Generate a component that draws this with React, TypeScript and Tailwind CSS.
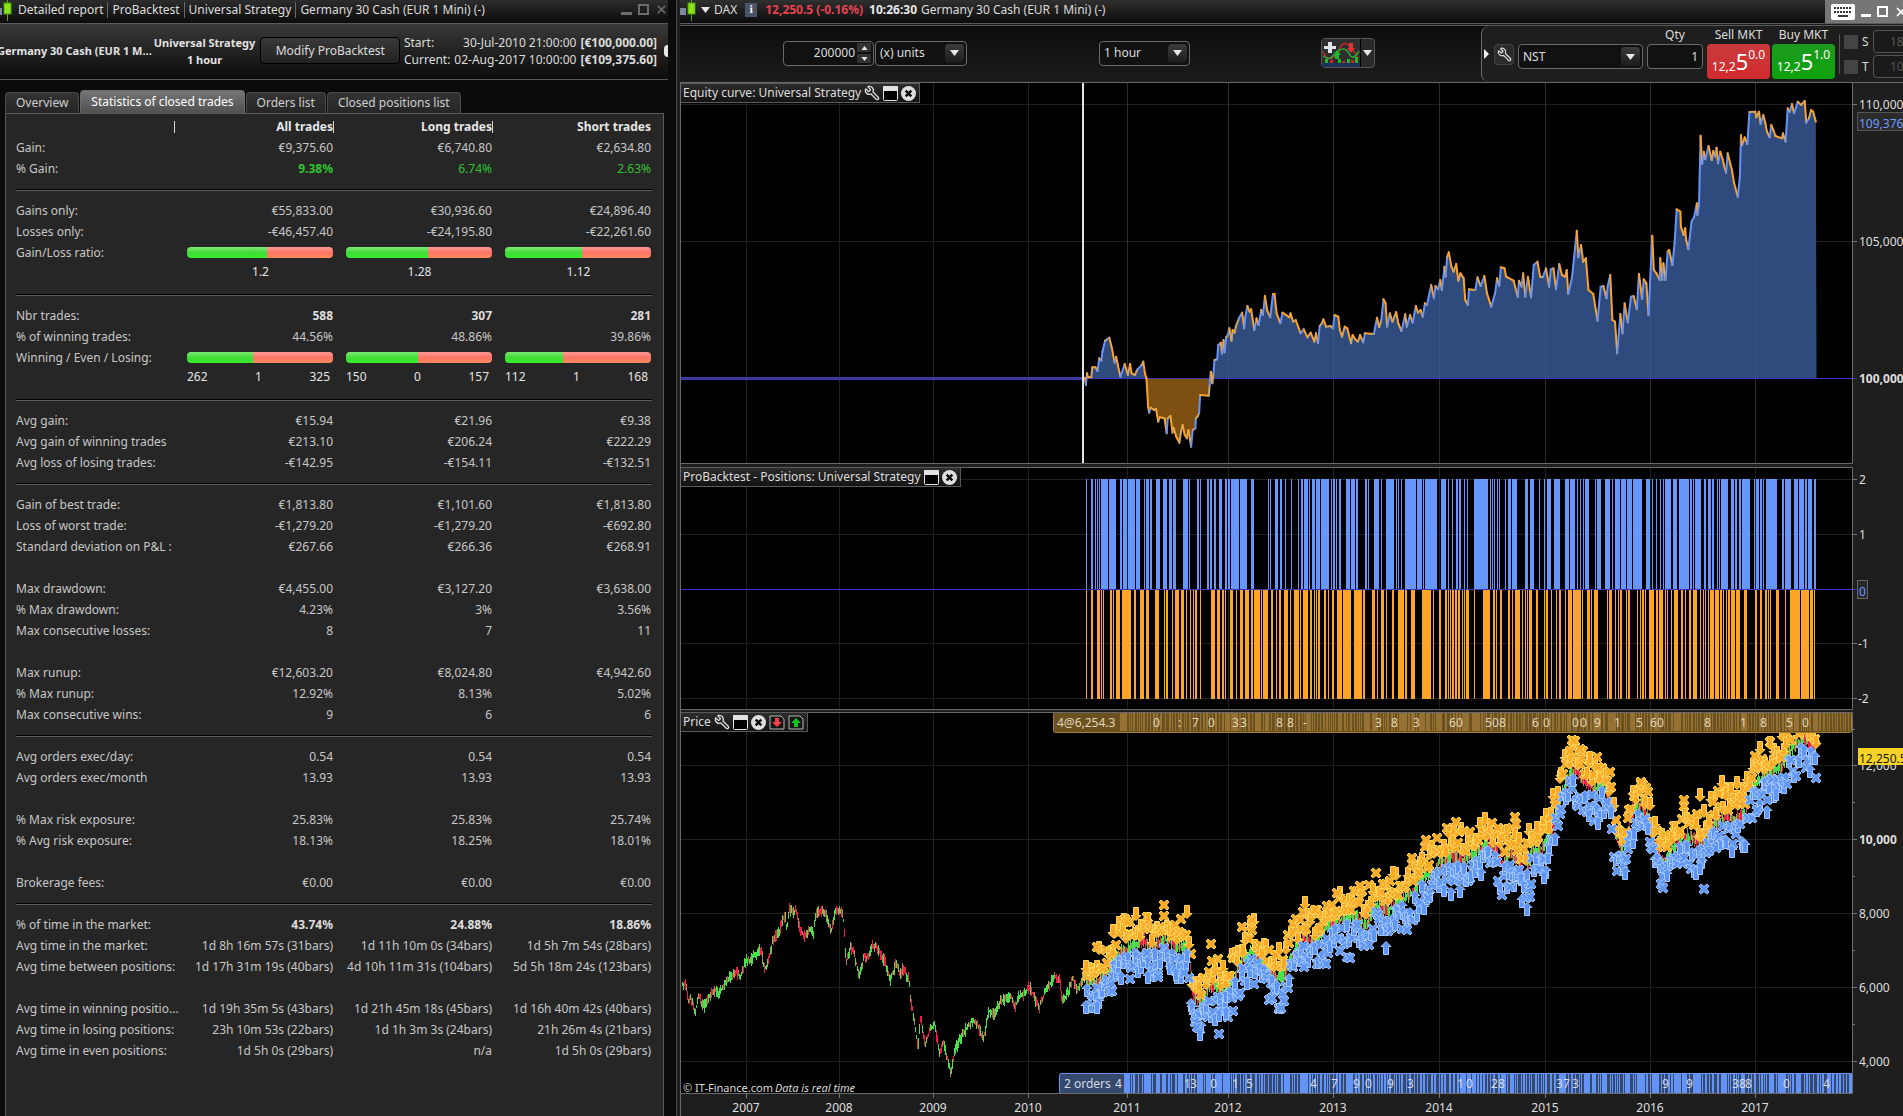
import React from 'react';
import { Wrench, X } from 'lucide-react';

type Point = [number, number];

// ---------------------------------------------------------------- report data

type Row =
  | { kind: 'values'; label: string; cells: string[]; bold?: boolean; gain?: boolean }
  | { kind: 'bars'; label: string; shares: number[] }
  | { kind: 'ratios'; cells: string[] }
  | { kind: 'split'; cells: string[][] }
  | { kind: 'line' }
  | { kind: 'blank' };

const v = (label: string, ...cells: string[]): Row => ({ kind: 'values', label, cells });
const b = (label: string, ...cells: string[]): Row => ({ kind: 'values', label, cells, bold: true });
const line: Row = { kind: 'line' };
const blank: Row = { kind: 'blank' };

const ROWS: Row[] = [
  v('Gain:', '€9,375.60', '€6,740.80', '€2,634.80'),
  { kind: 'values', label: '% Gain:', cells: ['9.38%', '6.74%', '2.63%'], gain: true },
  line,
  v('Gains only:', '€55,833.00', '€30,936.60', '€24,896.40'),
  v('Losses only:', '-€46,457.40', '-€24,195.80', '-€22,261.60'),
  { kind: 'bars', label: 'Gain/Loss ratio:', shares: [55, 56, 53] },
  { kind: 'ratios', cells: ['1.2', '1.28', '1.12'] },
  line,
  b('Nbr trades:', '588', '307', '281'),
  v('% of winning trades:', '44.56%', '48.86%', '39.86%'),
  { kind: 'bars', label: 'Winning / Even / Losing:', shares: [45, 49, 40] },
  { kind: 'split', cells: [['262', '1', '325'], ['150', '0', '157'], ['112', '1', '168']] },
  line,
  v('Avg gain:', '€15.94', '€21.96', '€9.38'),
  v('Avg gain of winning trades', '€213.10', '€206.24', '€222.29'),
  v('Avg loss of losing trades:', '-€142.95', '-€154.11', '-€132.51'),
  line,
  v('Gain of best trade:', '€1,813.80', '€1,101.60', '€1,813.80'),
  v('Loss of worst trade:', '-€1,279.20', '-€1,279.20', '-€692.80'),
  v('Standard deviation on P&L :', '€267.66', '€266.36', '€268.91'),
  blank,
  v('Max drawdown:', '€4,455.00', '€3,127.20', '€3,638.00'),
  v('% Max drawdown:', '4.23%', '3%', '3.56%'),
  v('Max consecutive losses:', '8', '7', '11'),
  blank,
  v('Max runup:', '€12,603.20', '€8,024.80', '€4,942.60'),
  v('% Max runup:', '12.92%', '8.13%', '5.02%'),
  v('Max consecutive wins:', '9', '6', '6'),
  line,
  v('Avg orders exec/day:', '0.54', '0.54', '0.54'),
  v('Avg orders exec/month', '13.93', '13.93', '13.93'),
  blank,
  v('% Max risk exposure:', '25.83%', '25.83%', '25.74%'),
  v('% Avg risk exposure:', '18.13%', '18.25%', '18.01%'),
  blank,
  v('Brokerage fees:', '€0.00', '€0.00', '€0.00'),
  line,
  b('% of time in the market:', '43.74%', '24.88%', '18.86%'),
  v('Avg time in the market:', '1d 8h 16m 57s (31bars)', '1d 11h 10m 0s (34bars)', '1d 5h 7m 54s (28bars)'),
  v('Avg time between positions:', '1d 17h 31m 19s (40bars)', '4d 10h 11m 31s (104bars)', '5d 5h 18m 24s (123bars)'),
  blank,
  v('Avg time in winning positio...', '1d 19h 35m 5s (43bars)', '1d 21h 45m 18s (45bars)', '1d 16h 40m 42s (40bars)'),
  v('Avg time in losing positions:', '23h 10m 53s (22bars)', '1d 1h 3m 3s (24bars)', '21h 26m 4s (21bars)'),
  v('Avg time in even positions:', '1d 5h 0s (29bars)', 'n/a', '1d 5h 0s (29bars)'),
];

// ----------------------------------------------------------------- chart data

const YEARS: [string, number][] = [
  ['2007', 746], ['2008', 839], ['2009', 933], ['2010', 1028], ['2011', 1127], ['2012', 1228],
  ['2013', 1333], ['2014', 1439], ['2015', 1545], ['2016', 1650], ['2017', 1755],
];

const parse = (s: string): Point[] => s.trim().split(/\s+/).map((p) => p.split(',').map(Number) as Point);

const EQUITY = parse(`
28,863 30,885 32,850 34,862 40,862 42,832 48,832 52,843 55,805 59,812 61,785 66,752 70,748 74,743 79,775 84,818 87,800
90,825 95,860 103,822 109,855 113,822 116,850 122,855 127,838 135,825 138,815 141,850 144,865 147,950 149,968 152,953
158,960 162,957 166,995 169,982 178,985 182,1030 184,985 189,978 193,1028 195,1013 200,1040 206,1058 209,1025 212,1005
216,1035 220,1045 223,1020 228,1070 231,1020 236,1015 237,985 240,980 243,970 245,915 261,917 263,885 265,845 268,880
270,850 272,810 277,808 279,765 284,758 286,792 289,750 291,787 294,742 297,735 300,715 304,752 306,720 310,728 312,710
318,685 324,668 328,715 330,680 334,648 338,665 341,658 347,720 351,685 355,705 360,660 363,675 367,618 371,660 377,682
382,612 385,612 389,670 396,700 400,668 413,682 415,670 420,695 425,690 434,730 440,718 447,742 453,728 460,755 463,730
467,760 470,708 474,700 477,688 482,710 490,708 495,715 498,675 505,680 508,720 512,740 517,710 522,715 529,760 532,735
538,750 542,755 546,735 552,757 555,730 572,732 578,683 582,712 586,690 590,628 594,640 597,710 602,670 607,695 614,666
618,700 624,723 631,673 634,710 640,675 645,698 651,648 655,668 660,660 664,680 668,640 672,645 680,585 685,625 688,588
693,598 697,570 700,600 705,530 707,560 710,500 713,487 718,530 722,545 727,522 731,572 735,550 741,565 744,630 749,645
751,598 763,600 767,562 773,588 780,558 785,610 793,650 800,610 804,565 808,588 811,532 818,535 821,560 835,572 843,620
845,572 850,590 853,550 857,620 862,560 868,622 873,525 880,515 885,560 890,562 896,535 902,590 905,538 910,535 915,598
921,522 926,555 932,560 935,540 938,612 945,562 949,500 954,422 957,502 962,465 966,515 971,505 976,600 985,612 993,692
999,590 1004,588 1010,625 1012,590 1017,555 1021,690 1026,695 1030,790 1036,672 1040,730 1044,640 1050,697 1056,620
1061,618 1067,658 1071,552 1077,627 1080,568 1085,580 1089,675 1096,437 1099,540 1104,550 1110,570 1111,505 1115,570
1117,520 1121,570 1125,485 1128,480 1134,525 1138,460 1142,358 1149,365 1150,410 1155,435 1158,415 1160,450 1164,478
1170,395 1175,380 1180,340 1181,375 1184,345 1187,137 1190,222 1193,185 1196,208 1202,168 1208,210 1211,183 1215,200
1217,173 1220,220 1224,185 1229,210 1231,225 1235,248 1238,190 1243,222 1246,240 1250,278 1257,320 1261,260 1263,135
1265,165 1270,142 1275,162 1279,66 1290,65 1292,82 1297,65 1300,102 1305,75 1309,100 1312,125 1317,142 1320,105 1324,120
1328,138 1340,145 1342,130 1347,155 1351,55 1355,65 1359,42 1363,70 1370,35 1376,45 1383,33 1386,98 1391,85 1395,60
1399,65 1404,95`).map(([x, y]): Point => [1070 + x / 1.8824, 90 + y / 3]);

// position runs, "from-to", first half and second half of the test period
const spans = (s: string, origin: number, scale: number): Point[] =>
  s.trim().split(/\s+/).map((r) => {
    const [from, to] = r.split('-').map(Number);
    return [Math.round(origin + from / scale), Math.max(1, Math.round((to - from) / scale))];
  });

const LONGS = [
  ...spans(`1052-1055 1065-1071 1075-1077 1080-1082 1085-1087 1090-1104 1106-1108 1110-1128 1138-1142 1145-1154 1158-1176
1179-1189 1199-1201 1204-1211 1214-1219 1229-1239 1247-1257 1262-1270 1272-1280 1297-1310 1313-1315 1333-1337 1340-1343
1358-1362 1366-1372 1375-1381 1388-1396 1404-1408 1411-1416 1419-1440 1442-1459 1469-1477 1512-1514 1517-1519 1530-1538
1543-1549 1555-1558`, 670, 2.529),
  ...spans(`0-5 12-14 28-30 46-48 52-56 60-70 73-75 80-88 91-100 102-114 116-124 128-130 134-140 142-144 148-153 166-176
179-190 192-198 214-218 222-224 237-249 253-256 267-287 291-293 297-299 304-306 315-342 345-358 361-364 366-395 405-418
422-424 432-434 444-448 450-456 463-465 470-472 488-502 504-525 529-531 534-536 539-541 545-547 550-551 567-569 574-582
584-596 617-625 628-639 652-654 664-666 673-682 690-705 717-728 730-742 747-749 755-758 762-764 768-778 793-795 797-808
819-831 835-838 842-846 849-857 859-872 874-886 888-911 921-931 936-938 947-949 957-959 963-965 969-984 989-999 1004-1030
1032-1036 1040-1043 1045-1059 1067-1072 1076-1084 1087-1092 1100-1103 1105-1108 1111-1128 1135-1142 1145-1150 1154-1158
1163-1183 1192-1194 1197-1204 1208-1212 1215-1218 1224-1251 1263-1269 1272-1286 1294-1303 1305-1309 1312-1320 1322-1326
1329-1338 1344-1348`, 1280, 2.5168),
];

const SHORTS = [
  ...spans(`1052-1055 1065-1070 1080-1087 1090-1092 1095-1098 1113-1118 1121-1124 1128-1138 1143-1166 1173-1179 1189-1199
1204-1211 1227-1237 1249-1252 1254-1259 1270-1272 1277-1286 1292-1300 1305-1308 1315-1318 1323-1326 1328-1333 1340-1343
1368-1378 1383-1391 1396-1401 1403-1406 1416-1424 1431-1434 1442-1450 1455-1464 1469-1474 1477-1491 1495-1497 1500-1512
1519-1525 1533-1536 1540-1546 1553-1562`, 670, 2.529),
  ...spans(`0-3 10-14 18-20 24-27 35-48 51-54 57-70 76-82 85-87 90-92 95-101 111-117 121-123 131-137 143-156 158-179 186-193
195-207 210-214 232-240 243-246 254-261 266-268 282-286 297-312 315-320 330-340 357-374 376-382 386-388 399-405 415-420
423-425 428-430 432-437 440-446 449-453 457-460 464-466 469-476 488-490 511-528 536-540 543-545 554-559 574-580 583-586
591-603 609-612 616-618 621-623 627-634 644-648 665-667 669-674 683-686 695-697 702-706 718-721 725-735 737-758 760-763
773-780 783-785 790-797 799-802 823-825 828-835 842-845 850-852 855-861 870-872 877-881 899-902 905-907 910-914 919-921
929-938 940-942 946-950 954-964 969-971 974-976 983-985 991-1002 1009-1015 1019-1021 1029-1035 1040-1049 1058-1061
1065-1067 1070-1072 1076-1079 1081-1091 1095-1104 1107-1111 1116-1118 1122-1124 1128-1132 1135-1145 1148-1159 1168-1175
1196-1202 1207-1211 1220-1224 1228-1230 1234-1237 1248-1256 1271-1273 1284-1309 1311-1331 1334-1342 1345-1348`, 1280, 2.5168),
];

const HISTORY = parse(`
30,400 38,395 45,450 52,440 62,485 72,435 84,470 95,440 105,430 115,418 122,432 135,400 150,378 165,360 178,378 190,330
205,325 218,305 230,295 237,355 245,340 260,265 275,240 290,190 294,235 300,175 310,185 318,175 328,240 342,255 355,235
362,245 368,190 378,178 392,185 398,215 407,235 418,180 428,175 437,200 440,240 444,340 455,290 462,295 478,375 490,315
500,320 510,285 520,285 530,305 542,330 556,385 570,340 580,365 588,355 603,385 608,450 616,500 626,590 632,500 645,580
655,540 668,520 680,605 690,570 700,620 710,665 718,600 735,560 750,530 765,505 780,530 792,565 805,480 820,490 835,450
850,440 860,430 870,470 880,440 890,435 908,405 920,440 932,470 945,430 960,400 972,375 985,390 990,445 1000,440 1010,410
1018,380 1028,420 1038,395 1048,375`).map(([x, y]): Point => [670 + x / 2.529, 850 + y / 3]);

const TRADED = parse(`
1086,982 1095,980 1105,975 1117,953 1129,948 1144,939 1150,950 1164,938 1180,947 1188,940 1192,990 1200,1003 1210,983
1223,992 1233,980 1239,962 1253,950 1263,962 1277,978 1285,972 1292,953 1302,938 1316,940 1328,925 1343,918 1355,915
1365,925 1375,903 1387,910 1399,900 1411,893 1421,877 1433,872 1439,860 1451,857 1463,860 1475,852 1487,843 1496,850
1502,863 1510,853 1518,860 1524,877 1532,850 1542,847 1550,833 1558,803 1566,780 1572,768 1582,778 1594,788 1604,783
1610,800 1616,837 1624,853 1632,810 1641,803 1649,820 1655,847 1663,863 1671,847 1685,835 1701,843 1711,827 1721,817
1735,818 1745,813 1751,787 1761,778 1773,770 1782,762 1792,747 1804,737 1816,750`);

// lone markers away from the price cloud: x, y, shape
const SELL_EXTRA: [number, number, 'x' | 'a'][] = [
  [1164, 904, 'x'], [1097, 946, 'x'], [1125, 918, 'x'], [1127, 921, 'x'], [1252, 919, 'x'], [1242, 926, 'x'], [1211, 943, 'x'],
  [1212, 960, 'x'], [1113, 930, 'a'], [1086, 966, 'a'], [1305, 902, 'a'], [1315, 909, 'x'], [1337, 892, 'x'], [1360, 885, 'x'],
  [1393, 872, 'a'], [1412, 857, 'x'], [1426, 839, 'x'], [1456, 821, 'x'], [1515, 816, 'x'], [1516, 823, 'x'], [1537, 827, 'a'],
  [1572, 739, 'x'], [1574, 740, 'x'], [1570, 750, 'x'], [1580, 748, 'x'], [1598, 766, 'x'], [1610, 771, 'x'], [1641, 781, 'x'],
  [1684, 799, 'x'], [1700, 794, 'a'], [1722, 781, 'a'], [1737, 782, 'a'], [1755, 755, 'x'], [1770, 742, 'a'],
];
const BUY_EXTRA: [number, number, 'x' | 'a'][] = [
  [1086, 1006, 'a'], [1097, 1006, 'a'], [1130, 978, 'x'], [1148, 976, 'a'], [1158, 976, 'x'], [1176, 973, 'a'], [1184, 972, 'x'],
  [1112, 990, 'x'], [1195, 1021, 'x'], [1197, 1026, 'x'], [1200, 1033, 'a'], [1219, 1033, 'x'], [1219, 1014, 'a'], [1226, 1012, 'a'],
  [1279, 1007, 'x'], [1281, 1007, 'x'], [1272, 997, 'x'], [1304, 966, 'x'], [1326, 963, 'x'], [1347, 956, 'x'], [1350, 957, 'x'],
  [1386, 947, 'a'], [1402, 928, 'x'], [1407, 929, 'x'], [1428, 897, 'x'], [1451, 893, 'a'], [1460, 890, 'a'], [1510, 886, 'x'],
  [1527, 908, 'a'], [1530, 896, 'x'], [1544, 876, 'a'], [1598, 822, 'a'], [1623, 868, 'a'], [1625, 872, 'a'], [1661, 883, 'x'],
  [1663, 887, 'x'], [1704, 888, 'x'], [1732, 850, 'a'], [1767, 811, 'a'], [1776, 793, 'a'], [1757, 809, 'x'], [1700, 867, 'a'],
];

function makeRandom(seed: number) {
  let s = seed;
  return () => {
    s = (s * 16807) % 2147483647;
    return s / 2147483647;
  };
}

function at(series: Point[], x: number) {
  for (let i = 1; i < series.length; i++) {
    const [x0, y0] = series[i - 1];
    const [x1, y1] = series[i];
    if (x <= x1) return y0 + ((y1 - y0) * (x - x0)) / (x1 - x0);
  }
  return series[series.length - 1][1];
}

function buildCandles(series: Point[], seed: number, wick: number) {
  const rnd = makeRandom(seed);
  const out: { x: number; top: number; bottom: number; up: boolean }[] = [];
  const end = series[series.length - 1][0];
  for (let x = Math.ceil(series[0][0]); x < end; x += 1) {
    const a = at(series, x);
    const slope = at(series, Math.min(end, x + 2)) - a;
    const up = rnd() < (slope < 0 ? 0.72 : 0.3);
    out.push({ x, top: a - 1 - rnd() * wick, bottom: a + 1 + rnd() * wick, up });
  }
  return out;
}

function buildMarkers(dir: 1 | -1, seed: number, extra: [number, number, 'x' | 'a'][]) {
  const rnd = makeRandom(seed);
  const out: { x: number; y: number; shape: 'x' | 'a' }[] = [];
  for (let x = 1087; x < 1817; x += 1.7) {
    const y = at(TRADED, x) + dir * (7 + Math.pow(rnd(), 1.6) * 25);
    out.push({ x: Math.round(x), y: Math.round(y), shape: rnd() < 0.55 ? 'x' : 'a' });
  }
  return [...out, ...extra.map(([x, y, shape]) => ({ x, y, shape }))];
}

const HISTORY_CANDLES = buildCandles(HISTORY, 77, 6);
const TRADED_CANDLES = buildCandles(TRADED, 41, 8);
const SELLS = buildMarkers(-1, 1234, SELL_EXTRA);
const BUYS = buildMarkers(1, 987, BUY_EXTRA);

function buildStripes(from: number, to: number, seed: number) {
  const rnd = makeRandom(seed);
  const out: Point[] = [];
  let x = from;
  while (x < to) {
    const w = rnd() < 0.12 ? 4 + Math.floor(rnd() * 5) : 1 + Math.floor(rnd() * 1.5);
    out.push([x, Math.min(w, to - x)]);
    x += w + 1 + Math.floor(rnd() * 2.4);
  }
  return out;
}
const GOLD_STRIPES = buildStripes(1120, 1850, 5);
const BLUE_STRIPES = buildStripes(1124, 1852, 19);

const GOLD_DIGITS: [string, number][] = [
  ['0', 1153], [':', 1178], ['7', 1192], ['0', 1208], ['3', 1232], ['3', 1240], ['8', 1276], ['8', 1287], ['-', 1303],
  ['3', 1375], ['8', 1391], ['3', 1413], ['6', 1449], ['0', 1456], ['5', 1485], ['0', 1492], ['8', 1499], ['6', 1532],
  ['0', 1543], ['0', 1572], ['0', 1580], ['9', 1594], ['1', 1614], ['5', 1636], ['6', 1650], ['0', 1657], ['8', 1704],
  ['1', 1740], ['8', 1760], ['5', 1786], ['0', 1802],
];
const BLUE_DIGITS: [string, number][] = [
  ['1', 1184], ['3', 1190], ['0', 1210], ['1', 1232], ['5', 1246], ['4', 1310], ['7', 1331], ['9', 1353], ['0', 1365],
  ['9', 1387], ['3', 1407], ['1', 1457], ['0', 1466], ['2', 1491], ['8', 1498], ['3', 1556], ['7', 1563], ['3', 1572],
  ['9', 1662], ['9', 1686], ['3', 1732], ['8', 1739], ['8', 1745], ['0', 1783], ['4', 1823],
];

// ---------------------------------------------------------------------- icons

const CandleIcon = () => (
  <svg width="18" height="22" viewBox="0 0 18 22" className="shrink-0">
    <rect x="0" y="9" width="6" height="7" fill="#7b8ba0" />
    <rect x="11" y="0" width="1" height="22" fill="#57a81c" />
    <rect x="8" y="4" width="7" height="11" fill="#8be31b" stroke="#4f9c10" strokeWidth="1" />
  </svg>
);

const CloseIcon = () => (
  <svg width="15" height="15" viewBox="0 0 15 15">
    <circle cx="7.5" cy="7.5" r="7.5" fill="#dedede" />
    <path d="M4.7 4.7l5.6 5.6M10.3 4.7l-5.6 5.6" stroke="#0a0a0a" strokeWidth="2.4" />
  </svg>
);

const WindowIcon = () => (
  <svg width="15" height="15" viewBox="0 0 15 15">
    <rect x=".5" y=".5" width="14" height="14" rx="1" fill="#000" stroke="#e2e2e2" />
    <rect x="0" y="0" width="15" height="5" rx="1" fill="#e2e2e2" />
  </svg>
);

const ArrowPageIcon = ({ up }: { up?: boolean }) => (
  <svg width="16" height="15" viewBox="0 0 16 15">
    <path d="M1 1h11l3 3v10H1z" fill="#161616" stroke="#b5b5b5" />
    {up ? (
      <path d="M8 3l5 5h-3v4H6V8H3z" fill="#10c421" />
    ) : (
      <path d="M8 12L3 7h3V3h4v4h3z" fill="#f0404a" />
    )}
  </svg>
);

const IndicatorIcon = () => (
  <svg width="38" height="28" viewBox="0 0 38 28">
    <rect width="38" height="28" fill="#2e2e2e" />
    <rect y="24" width="38" height="4" fill="#1b2f5c" />
    <path d="M1 13q4 9 9 6t8-10 8-3 10 13" fill="none" stroke="#c52a2a" strokeWidth="1.5" />
    <path d="M1 17q6 5 11-1t9-6 7 6 9-4" fill="none" stroke="#24ad31" strokeWidth="1.5" />
    <path d="M6 3h4v4h4v3h-4v4H6v-4H2V7h4z" fill="#dfe3ea" />
    <path d="M27 4h4v5h2l-4 5-4-5h2z" fill="#e23333" />
    <path d="M13 20v-4h-2l4-5 4 5h-2v4z" fill="#21b52e" />
    <g fill="#21b52e"><rect x="3" y="20" width="3" height="4" /><rect x="16" y="20" width="3" height="4" /><rect x="25" y="20" width="3" height="4" /><rect x="33" y="18" width="3" height="6" /></g>
    <g fill="#c52a2a"><rect x="8" y="21" width="3" height="3" /><rect x="20" y="22" width="3" height="2" /><rect x="29" y="21" width="3" height="3" /></g>
  </svg>
);

const KeyboardIcon = () => (
  <svg width="24" height="16" viewBox="0 0 24 16">
    <rect width="24" height="16" rx="2" fill="#fff" />
    <g fill="#333">
      {[4, 7, 10, 13, 16, 19].map((x) => (
        <React.Fragment key={x}>
          <rect x={x - 1} y="3" width="2" height="2" />
          <rect x={x - 1} y="7" width="2" height="2" />
        </React.Fragment>
      ))}
      <rect x="7" y="11" width="10" height="2" />
    </g>
  </svg>
);

const Down = ({ className = '' }: { className?: string }) => (
  <svg width="9" height="6" viewBox="0 0 9 6" className={className}><path d="M0 0h9L4.500 6z" fill="#e8e8e8" /></svg>
);

// ----------------------------------------------------------------- left window

const Bar = ({ share }: { share: number }) => (
  <div className="ml-3 flex h-[11px] overflow-hidden rounded">
    <div className="bg-linear-to-b from-[#7be870] via-[#3fdc36] to-[#35ee2c]" style={{ width: `${share}%` }} />
    <div className="flex-1 bg-linear-to-b from-[#ff9a94] via-[#fb7466] to-[#ff8a5e]" />
  </div>
);

function StatRow({ row }: { row: Row }) {
  if (row.kind === 'line') {
    return (
      <tr className="h-[21px]">
        <td colSpan={4} className="p-0"><div className="h-[2px] border-t border-b border-t-black border-b-[#5c5c5c]" /></td>
      </tr>
    );
  }
  if (row.kind === 'blank') return <tr className="h-[21px]"><td colSpan={4} /></tr>;
  if (row.kind === 'bars') {
    return (
      <tr className="h-[21px]">
        <th scope="row" className="p-0 text-left font-normal">{row.label}</th>
        {row.shares.map((s, i) => <td key={i} className="p-0 pr-px"><Bar share={s} /></td>)}
      </tr>
    );
  }
  if (row.kind === 'ratios') {
    return (
      <tr className="h-[21px] text-[#e4e4e4]">
        <td />
        {row.cells.map((c) => <td key={c} className="p-0 pb-[3px] pl-3 text-center">{c}</td>)}
      </tr>
    );
  }
  if (row.kind === 'split') {
    return (
      <tr className="h-[21px] text-[#e4e4e4]">
        <td />
        {row.cells.map((c, i) => (
          <td key={i} className="p-0 pr-1 pb-[3px] pl-3">
            <div className="grid grid-cols-3"><span>{c[0]}</span><span className="text-center">{c[1]}</span><span className="text-right">{c[2]}</span></div>
          </td>
        ))}
      </tr>
    );
  }
  return (
    <tr className="h-[21px]">
      <th scope="row" className="p-0 text-left font-normal">{row.label}</th>
      {row.cells.map((c, i) => (
        <td
          key={i}
          className={`p-0 pr-px text-right ${row.bold ? 'font-bold text-[#dedede]' : ''} ${row.gain ? 'text-[#2fc42f]' : ''} ${row.gain && i === 0 ? 'font-bold' : ''}`}
        >
          {c}
        </td>
      ))}
    </tr>
  );
}

const TABS = ['Overview', 'Statistics of closed trades', 'Orders list', 'Closed positions list'];

function ReportWindow() {
  return (
    <section className="flex h-full min-w-0 flex-col overflow-hidden border-r-4 border-[#0a0a0a] bg-[#0b0b0b] pr-1">
      <header className="flex h-6 shrink-0 items-center overflow-hidden border-b border-[#5a5a5a] bg-linear-to-b from-[#2c2c2c] to-[#0c0c0c] pb-1 text-[#dcdcdc]">
        <div className="-ml-1 flex"><CandleIcon /></div>
        <span className="pr-1 pl-1">Detailed report</span>
        <span className="border-l border-[#6a6a6a] px-1">ProBacktest</span>
        <span className="border-l border-[#6a6a6a] px-1">Universal Strategy</span>
        <span className="border-l border-[#6a6a6a] px-1">Germany 30 Cash (EUR 1 Mini) (-)</span>
        <div className="ml-auto flex items-center gap-[6px] text-[#6c6c6c]">
          <button aria-label="Minimize" className="mt-2 h-[3px] w-[11px] bg-[#6c6c6c]" />
          <button aria-label="Maximize" className="h-[11px] w-[11px] border-2 border-[#6c6c6c]" />
          <button aria-label="Close"><X size={13} strokeWidth={3} /></button>
        </div>
      </header>

      <div className="flex h-14 shrink-0 items-center border-b border-[#5a5a5a] bg-linear-to-b from-[#3a3a3a] to-[#0c0c0c] pb-[2px] text-[#dcdcdc]">
        <div className="-ml-[3px] text-[11px] font-bold whitespace-nowrap text-[#e2e2e2]">Germany 30 Cash (EUR 1 M...</div>
        <div className="ml-[2px] text-center text-[11px] leading-[17px] font-bold whitespace-nowrap text-[#e2e2e2]">Universal Strategy<br />1 hour</div>
        <button className="ml-[5px] h-[27px] w-[140px] shrink-0 rounded border border-black bg-linear-to-b from-[#3a3a3a] to-[#222] whitespace-nowrap">
          Modify ProBacktest
        </button>
        <div className="ml-auto grid grid-cols-[auto_auto_auto] gap-x-1 pr-[7px] leading-[17px] whitespace-nowrap">
          <span>Start:</span><span className="text-right">30-Jul-2010 21:00:00</span><b>[€100,000.00]</b>
          <span>Current:</span><span className="text-right">02-Aug-2017 10:00:00</span><b>[€109,375.60]</b>
        </div>
        <div className="h-3 w-1 shrink-0 rounded-l-full bg-[#e8e8e8]" />
      </div>

      <nav className="flex h-[33px] shrink-0 items-end pl-[5px]">
        {TABS.map((t, i) => (
          <button
            key={t}
            className={`mr-px rounded-t border border-b-0 px-[10px] whitespace-nowrap ${i === 1 ? 'h-[23px] border-[#6a6a6a] bg-linear-to-b from-[#757575] to-[#505050] text-white' : 'h-[21px] border-[#4a4a4a] bg-linear-to-b from-[#333] to-[#262626] text-[#cfcfcf]'}`}
          >
            {t}
          </button>
        ))}
      </nav>

      <div className="mr-1 ml-[5px] flex-1 border border-b-0 border-[#5a5a5a] bg-[#262626] pt-[3px] pr-[11px] pl-[10px]">
        <table className="w-full table-fixed border-collapse whitespace-nowrap text-[#c6c6c6]">
          <colgroup><col className="w-1/4" /><col className="w-1/4" /><col className="w-1/4" /><col className="w-1/4" /></colgroup>
          <thead>
            <tr className="h-[20px] text-right text-[#e6e6e6]">
              <th className="p-0"><div className="h-3 border-r border-[#d8d8d8]" /></th>
              <th className="p-0"><div className="border-r border-[#d8d8d8] text-right leading-3">All trades</div></th>
              <th className="p-0"><div className="border-r border-[#d8d8d8] text-right leading-3">Long trades</div></th>
              <th className="p-0 pr-px text-right leading-3">Short trades</th>
            </tr>
          </thead>
          <tbody>
            {ROWS.map((r, i) => <StatRow key={i} row={r} />)}
          </tbody>
        </table>
      </div>
    </section>
  );
}

// ---------------------------------------------------------------- right window

const Select = ({ label, value, className }: { label: string; value: string; className: string }) => (
  <div className={`relative h-[25px] shrink-0 rounded border border-[#6a6a6a] bg-[#111] ${className}`}>
    <select aria-label={label} className="h-full w-full appearance-none bg-transparent pl-1 text-[#dedede] outline-none">
      <option>{value}</option>
    </select>
    <span className="pointer-events-none absolute inset-y-[2px] right-[2px] flex w-[19px] items-center justify-center rounded-sm bg-linear-to-b from-[#3c3c3c] to-[#1c1c1c]"><Down /></span>
  </div>
);

const PriceButton = ({ title, sup, className }: { title: string; sup: string; className: string }) => (
  <div className="flex flex-col items-center">
    <span className="leading-[18px]">{title}</span>
    <button aria-label={title} className={`flex h-[35px] w-[63px] items-start justify-center rounded pt-[5px] text-white ${className}`}>
      <span className="pt-[11px] leading-[14px]">12,2</span>
      <span className="text-[22px] leading-[24px]">5</span>
      <span className="leading-[12px]">{sup}</span>
    </button>
  </div>
);

function Toolbar() {
  return (
    <div className="flex h-[57px] shrink-0 items-center justify-between overflow-hidden border-b border-[#6a6a6a] bg-linear-to-b from-[#0c0c0c] to-[#1c1c1c] text-[#dcdcdc]">
      <div className="flex flex-1 items-center pb-[2px] pl-[103px]">
        <div className="flex h-[25px] w-[91px] shrink-0 items-center rounded border border-[#6a6a6a] bg-[#111] pr-[2px]">
          <input aria-label="Amount" defaultValue="200000" className="w-full min-w-0 bg-transparent pr-[2px] text-right outline-none" />
          <div className="flex flex-col gap-[2px]">
            <button aria-label="Increase" className="flex h-[9px] w-[14px] items-center justify-center bg-[#333]"><Down className="h-[4px] w-[7px] rotate-180" /></button>
            <button aria-label="Decrease" className="flex h-[9px] w-[14px] items-center justify-center bg-[#333]"><Down className="h-[4px] w-[7px]" /></button>
          </div>
        </div>
        <Select label="Units" value="(x) units" className="ml-px w-[92px]" />
        <Select label="Timeframe" value="1 hour" className="ml-[132px] w-[91px]" />
        <button aria-label="Indicators" className="ml-[131px] flex h-[30px] shrink-0 items-center rounded border border-[#555] bg-[#2a2a2a]">
          <IndicatorIcon />
          <span className="flex h-full w-[14px] items-center justify-center border-l border-black"><Down /></span>
        </button>
      </div>
      <div className="flex h-full w-[422px] shrink-0 items-start rounded-l-lg border-l border-[#6a6a6a] bg-[#1e1e1e]">
        <svg width="5" height="10" viewBox="0 0 5 10" className="mt-[23px] ml-[2px] shrink-0"><path d="M0 0l5 5-5 5z" fill="#eee" /></svg>
        <button aria-label="Order settings" className="mt-[18px] ml-[5px] flex h-[21px] w-[20px] shrink-0 items-center justify-center rounded border border-[#444] bg-[#2b2b2b]"><Wrench size={15} className="-scale-x-100" /></button>
        <Select label="Account" value="NST" className="mt-[18px] ml-1 w-[125px]" />
        <div className="ml-1 flex w-14 shrink-0 flex-col items-center">
          <label htmlFor="qty" className="leading-[18px]">Qty</label>
          <input id="qty" defaultValue="1" className="h-[25px] w-full rounded border border-[#6a6a6a] bg-[#111] px-1 text-right outline-none" />
        </div>
        <div className="ml-1 flex shrink-0 gap-[2px]">
          <PriceButton title="Sell MKT" sup="0.0" className="bg-linear-to-b from-[#c93a3a] to-[#d32a2e]" />
          <PriceButton title="Buy MKT" sup="1.0" className="bg-linear-to-b from-[#1d9a1d] to-[#0aa30a]" />
        </div>
        <div className="mt-2 ml-1 h-10 shrink-0 border-l border-[#555]" />
        <div className="mt-1 ml-1 flex shrink-0 flex-col gap-[2px] text-[#dcdcdc]">
          {[['S', '18'], ['T', '10']].map(([name, val]) => (
            <div key={name} className="flex items-center">
              <input id={`lvl-${name}`} type="checkbox" className="h-[14px] w-[14px] shrink-0 appearance-none bg-[#444]" />
              <label htmlFor={`lvl-${name}`} className="w-[15px] shrink-0 pl-1 leading-4">{name}</label>
              <input aria-label={`${name} level`} defaultValue={val} disabled className="h-[23px] w-12 shrink-0 rounded border border-[#555] bg-[#1a1a1a] pl-4 text-[#555]" />
            </div>
          ))}
        </div>
      </div>
    </div>
  );
}

const PaneTitle = ({ children, icons }: { children: string; icons: React.ReactNode }) => (
  <div className="absolute top-0 left-0 flex h-5 items-center gap-[3px] border border-l-0 border-[#5a5a5a] bg-linear-to-b from-[#2c2c2c] to-[#141414] pr-[3px] pl-[2px] text-[#dcdcdc]">
    <span>{children}</span>
    {icons}
  </div>
);

const Grid = ({ top, bottom, levels }: { top: number; bottom: number; levels: number[] }) => (
  <g stroke="#202020" shapeRendering="crispEdges">
    {YEARS.map(([y, x]) => <line key={y} x1={x + 0.5} x2={x + 0.5} y1={top} y2={bottom} />)}
    {levels.map((y) => <line key={y} x1="681" x2="1852" y1={y + 0.5} y2={y + 0.5} />)}
    {levels.map((y) => <line key={y} x1="1852" x2="1857" y1={y + 0.5} y2={y + 0.5} stroke="#777" />)}
  </g>
);

const AREA = `M${EQUITY[0][0]} 378 ${EQUITY.map(([x, y]) => `L${x} ${y}`).join(' ')} L1816.500 378Z`;

function EquityChart() {
  return (
    <section className="relative h-[384px] shrink-0 overflow-hidden border-l border-[#6a6a6a]">
      <svg className="block h-full w-full" role="img" aria-label="Equity curve">
        <defs>
          <clipPath id="above"><rect x="1000" y="0" width="900" height="378" /></clipPath>
          <clipPath id="below"><rect x="1000" y="378" width="900" height="90" /></clipPath>
        </defs>
        <g transform="translate(-681 -83)">
          <rect x="681" y="83" width="1171" height="380" fill="#000" />
          <Grid top={83} bottom={463} levels={[104, 241, 378]} />
          <path d={AREA} fill="#2f4a7c" clipPath="url(#above)" />
          <path d={AREA} fill="#7d4f10" clipPath="url(#below)" />
          <g stroke="#fff" strokeOpacity=".06">
            {YEARS.slice(4).map(([y, x]) => <line key={y} x1={x + 0.5} x2={x + 0.5} y1="83" y2="463" />)}
          </g>
          <rect x="681" y="377" width="402" height="3" fill="#3a3aa0" />
          <rect x="1083" y="378" width="774" height="1" fill="#3b35b8" />
          <g strokeWidth="2" strokeLinecap="round">
            {EQUITY.slice(1).map(([x, y], i) => {
              const [px, py] = EQUITY[i];
              const color = y < py ? (py - y > 11 || i % 3 === 0 ? '#6594fb' : '#c9a572') : '#fba32b';
              return <line key={i} x1={px} y1={py} x2={x} y2={y} stroke={color} />;
            })}
          </g>
          <rect x="1082" y="83" width="2" height="380" fill="#e4e4e4" />
          <path d="M681 463.500H1852.500M1852.500 83V463.500" stroke="#6a6a6a" fill="none" />
          <g fill="#dedede" fontSize="12">
            <text x="1859" y="109">110,000</text>
            <text x="1859" y="246">105,000</text>
            <text x="1859" y="383" fontWeight="bold">100,000</text>
          </g>
          <rect x="1857.500" y="112.500" width="60" height="18" fill="#2b2b2b" stroke="#555" />
          <text x="1859" y="128" fill="#6d9bff" fontSize="12">109,376</text>
        </g>
      </svg>
      <PaneTitle icons={<><Wrench size={16} className="-scale-x-100" /><WindowIcon /><CloseIcon /></>}>Equity curve: Universal Strategy</PaneTitle>
    </section>
  );
}

function PositionsChart() {
  return (
    <section className="relative h-[245px] shrink-0 overflow-hidden border-l border-[#6a6a6a]">
      <svg className="block h-full w-full" role="img" aria-label="Positions">
        <g transform="translate(-681 -466)">
          <rect x="681" y="466" width="1171" height="242" fill="#000" />
          <Grid top={467} bottom={708} levels={[478, 533, 588, 642, 697]} />
          <g shapeRendering="crispEdges">
            {LONGS.map(([x, w], i) => <rect key={i} x={x} y="478" width={w} height="110" fill="#6797fc" />)}
            {SHORTS.map(([x, w], i) => <rect key={i} x={x} y="589" width={w} height="109" fill="#fda429" />)}
          </g>
          <rect x="681" y="588" width="1176" height="1" fill="#3b35b8" />
          <path d="M681 466.500H1852.500V708.500H681" stroke="#6a6a6a" fill="none" />
          <g fill="#dedede" fontSize="12">
            <text x="1859" y="483">2</text>
            <text x="1859" y="538">1</text>
            <text x="1858" y="647">-1</text>
            <text x="1858" y="702">-2</text>
          </g>
          <rect x="1857.500" y="579.500" width="10" height="18" fill="#26292e" stroke="#666" />
          <text x="1859" y="595" fill="#6d9bff" fontSize="12">0</text>
        </g>
      </svg>
      <PaneTitle icons={<><WindowIcon /><CloseIcon /></>}>ProBacktest - Positions: Universal Strategy</PaneTitle>
    </section>
  );
}

function PriceChart() {
  return (
    <section className="relative min-h-0 flex-1 overflow-hidden border-l border-[#6a6a6a]">
      <svg className="block h-full w-full" role="img" aria-label="Price">
        <defs>
          <path id="cross" d="M-5 -3L-3 -5L0 -2.500L3 -5L5 -3L2.500 0L5 3L3 5L0 2.500L-3 5L-5 3L-2.500 0Z" />
          <path id="arrow" d="M0 -6.500L5 -1.500H2.500V6.500H-2.500V-1.500H-5Z" />
        </defs>
        <g transform="translate(-681 -711)">
          <rect x="681" y="711" width="1171" height="381" fill="#000" />
          <Grid top={712} bottom={1092} levels={[764, 838, 912, 986, 1060]} />
          <g shapeRendering="crispEdges">
            {[...HISTORY_CANDLES, ...TRADED_CANDLES].map((c, i) => (
              <rect key={i} x={c.x} y={c.top} width="1" height={c.bottom - c.top} fill={c.up ? '#45e04a' : i % 4 === 0 ? '#b08a4c' : '#ee1c48'} />
            ))}
          </g>
          <g fill="#fba827" stroke="#ffd65c" strokeWidth="1">
            {SELLS.map((m, i) => (
              <use key={i} href={m.shape === 'x' ? '#cross' : '#arrow'} transform={`translate(${m.x} ${m.y})${m.shape === 'a' ? ' scale(1 -1)' : ''}`} />
            ))}
          </g>
          <g fill="#5f96f6" stroke="#a3c8ff" strokeWidth="1">
            {BUYS.map((m, i) => (
              <use key={i} href={m.shape === 'x' ? '#cross' : '#arrow'} transform={`translate(${m.x} ${m.y})`} />
            ))}
          </g>

          <rect x="1053.500" y="711.500" width="798" height="20" rx="2" fill="#6b5120" stroke="#a37f33" />
          <g fill="#957233" shapeRendering="crispEdges">
            {GOLD_STRIPES.map(([x, w]) => <rect key={x} x={x} y="712" width={w} height="18" />)}
          </g>
          <g fill="#e2d6b8" fontSize="12">
            <text x="1057" y="726">4@6,254.3</text>
            {GOLD_DIGITS.map(([d, x]) => <text key={x} x={x} y="726">{d}</text>)}
          </g>

          <rect x="1059.500" y="1072.500" width="793" height="20" rx="2" fill="#35496e" stroke="#6797fc" />
          <g fill="#6293f5" shapeRendering="crispEdges">
            {BLUE_STRIPES.map(([x, w]) => <rect key={x} x={x} y="1073" width={w} height="19" />)}
          </g>
          <g fill="#d5dae4" fontSize="12">
            <text x="1064" y="1087">2 orders</text>
            <text x="1115" y="1087">4</text>
            {BLUE_DIGITS.map(([d, x]) => <text key={x} x={x} y="1087">{d}</text>)}
          </g>

          <path d="M681 711.500H1852.500V1092.500H681" stroke="#6a6a6a" fill="none" />
          <g stroke="#777">
            {[728, 801, 875, 949, 1023].map((y) => <line key={y} x1="1852" x2="1855" y1={y + 0.5} y2={y + 0.5} />)}
            {YEARS.map(([y, x]) => <line key={y} x1={x + 0.5} x2={x + 0.5} y1="1092" y2="1097" />)}
          </g>
          <g fill="#dedede" fontSize="12">
            <text x="1859" y="769">12,000</text>
            <text x="1859" y="843" fontWeight="bold">10,000</text>
            <text x="1859" y="917">8,000</text>
            <text x="1859" y="991">6,000</text>
            <text x="1859" y="1065">4,000</text>
            {YEARS.map(([y, x]) => <text key={y} x={x} y="1111" textAnchor="middle">{y}</text>)}
          </g>
          <rect x="1858" y="747" width="60" height="17" fill="#f5d327" />
          <text x="1859" y="762" fill="#1c1c1c" fontSize="12">12,250.5</text>
          <text x="683" y="1091" fill="#dcdcdc" fontSize="11">© IT-Finance.com</text>
          <text x="775" y="1091" fill="#dcdcdc" fontSize="11" fontStyle="italic">Data is real time</text>
        </g>
      </svg>
      <PaneTitle icons={<><Wrench size={16} className="-scale-x-100" /><WindowIcon /><CloseIcon /><ArrowPageIcon /><ArrowPageIcon up /></>}>Price</PaneTitle>
    </section>
  );
}

function ChartWindow() {
  return (
    <section className="flex h-full min-w-0 flex-col overflow-hidden border-l border-[#4a4a4a] bg-[#1e1e1e] pl-[3px]">
      <header className="flex h-6 shrink-0 items-center border-b border-[#5a5a5a] bg-linear-to-b from-[#303030] to-[#0c0c0c] text-[#dcdcdc]">
        <div className="flex items-center pb-1">
          <CandleIcon />
          <Down className="mr-1 ml-[3px]" />
          <span>DAX</span>
          <span className="mr-2 ml-2 flex h-[14px] w-3 items-center justify-center bg-[#4a5468] font-serif text-[11px] font-bold text-white">i</span>
          <span className="font-bold text-[#e8434f]">12,250.5 (-0.16%)</span>
          <span className="ml-[6px] font-bold text-[#e8e8e8]">10:26:30</span>
          <span className="ml-1">Germany 30 Cash (EUR 1 Mini) (-)</span>
        </div>
        <div className="ml-auto flex h-full w-[78px] items-center gap-[6px] overflow-hidden bg-[#767676] pl-[6px] text-white">
          <button aria-label="Keyboard" className="shrink-0"><KeyboardIcon /></button>
          <button aria-label="Minimize" className="mt-2 h-[3px] w-[10px] shrink-0 bg-white" />
          <button aria-label="Maximize" className="h-[11px] w-[11px] shrink-0 border-2 border-white" />
          <button aria-label="Close" className="shrink-0"><X size={14} strokeWidth={3} /></button>
        </div>
      </header>
      <div className="h-[2px] shrink-0 border-b border-[#5a5a5a]" />
      <Toolbar />
      <EquityChart />
      <PositionsChart />
      <PriceChart />
    </section>
  );
}

export default function App() {
  return (
    <main className="grid h-screen grid-cols-[676fr_1227fr] overflow-hidden bg-[#0b0b0b] font-['Noto_Sans',sans-serif] text-[12px] leading-4">
      <ReportWindow />
      <ChartWindow />
    </main>
  );
}
